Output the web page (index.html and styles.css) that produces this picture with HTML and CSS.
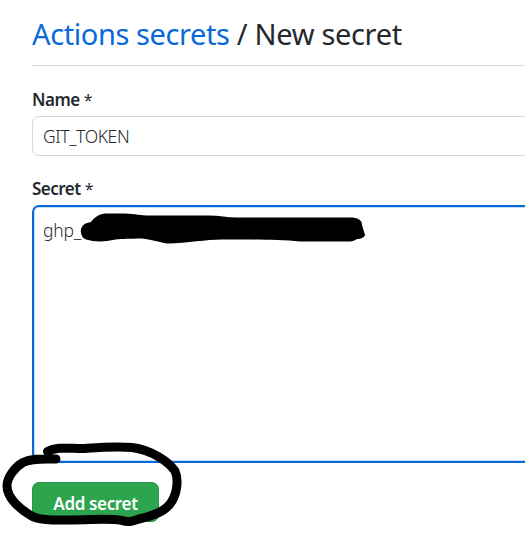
FILE: index.html
```html
<!DOCTYPE html>
<html lang="en">
<head>
<meta charset="utf-8">
<title>New secret</title>
<link rel="stylesheet" href="styles.css">
</head>
<body>
<main class="page">
  <h1 class="title"><a class="title-link">Actions secrets</a> <span class="title-current">/ New secret</span></h1>
  <form class="form">
    <label class="label label-name" for="name">Name <span class="star">*</span></label>
    <div class="input" id="name"><span class="value-name">GIT_TOKEN</span></div>
    <label class="label label-secret" for="secret">Secret <span class="star">*</span></label>
    <div class="textarea" id="secret"><span class="value-secret">ghp_</span></div>
    <button class="button" type="button"><span class="button-text">Add secret</span></button>
  </form>
  <svg class="marks" width="525" height="547" viewBox="0 0 525 547" aria-hidden="true">
    <path d="M91 222C95 216 101 213.500 107 213.500H125C135 214 141 215.500 149 215.500H209C219 215.500 227 217.500 237 217.500H350C358 217.500 362 220 362 225L365 235C364 238 360 239 357 239C353 242 350 241.500 344 241.500H300C285 240 265 240 250 239.500H222C206 239.500 188 243 167 243.500C155 241 146 238 137 238.500C128 239 119 238.500 113 240C105 242 94 242 86 239.500C80 237 79 228 84 224.500C86 223 88 222.500 91 222Z"/>
    <path class="stroke" d="M47.500 451.500C57 446.500 67 448.500 84 448.500C98 447.500 116 446 132 447.500C152 450 169 462 175 471C179 480 177 495 170 504C163 513 150 516.500 139 519C132 521.500 128 522.500 122 520.500C109 518 91 520 73 520C56 520 39 521 30 515C20 509 7 498 7 486C7 477 15 467 23 462.500C32 458 43 459 56 459"/>
  </svg>
</main>
</body>
</html>
```
FILE: styles.css
```css
* { box-sizing: border-box; }
body {
  margin: 0;
  background: #fff;
  color: #24292f;
  font-family: "Noto Sans", "Open Sans", sans-serif;
  overflow: hidden;
}
.page {
  position: relative;
  height: 547px;
  padding-left: 32px;
}
.title {
  height: 66px;
  margin: 0;
  padding-top: 14px;
  border-bottom: 1px solid #d8dbdf;
  font-size: 29px;
  font-weight: 400;
  line-height: 40px;
  letter-spacing: -0.32px;
  white-space: nowrap;
}
.title-link {
  color: #0969da;
  letter-spacing: -0.4px;
}
.form {
  display: flex;
  flex-direction: column;
  align-items: flex-start;
}
.label {
  height: 24px;
  font-size: 17px;
  font-weight: 600;
  line-height: 24px;
  letter-spacing: -0.5px;
}
.label-name { margin: 22px 0 4px; }
.label-secret { margin: 21px 0 4px; }
.star {
  font-size: 16px;
  font-weight: 400;
}
.input, .textarea {
  align-self: stretch;
  margin-right: -20px;
  padding-left: 10px;
  border: 1px solid #d0d7de;
  border-radius: 7px;
  font-size: 17.5px;
  font-weight: 350;
}
.input {
  height: 40px;
  line-height: 39px;
  letter-spacing: -0.4px;
}
.textarea {
  height: 258px;
  padding: 11px 0 0 9px;
  border: 2px solid #0969da;
  box-shadow: inset 0 0 0 1px #c5dcf7;
  line-height: 24px;
  letter-spacing: -0.2px;
}
.button {
  width: 127px;
  height: 40px;
  margin-top: 19px;
  padding: 3px 0 0;
  border: 1px solid #2a964a;
  border-radius: 7px;
  background: #2da44e;
  color: #fff;
  font: 600 17px/24px "Noto Sans", "Open Sans", sans-serif;
  letter-spacing: -0.35px;
  white-space: nowrap;
}
.marks {
  position: absolute;
  inset: 0;
  pointer-events: none;
}
.stroke {
  fill: none;
  stroke: #000;
  stroke-width: 9;
  stroke-linecap: round;
  stroke-linejoin: round;
}
```
